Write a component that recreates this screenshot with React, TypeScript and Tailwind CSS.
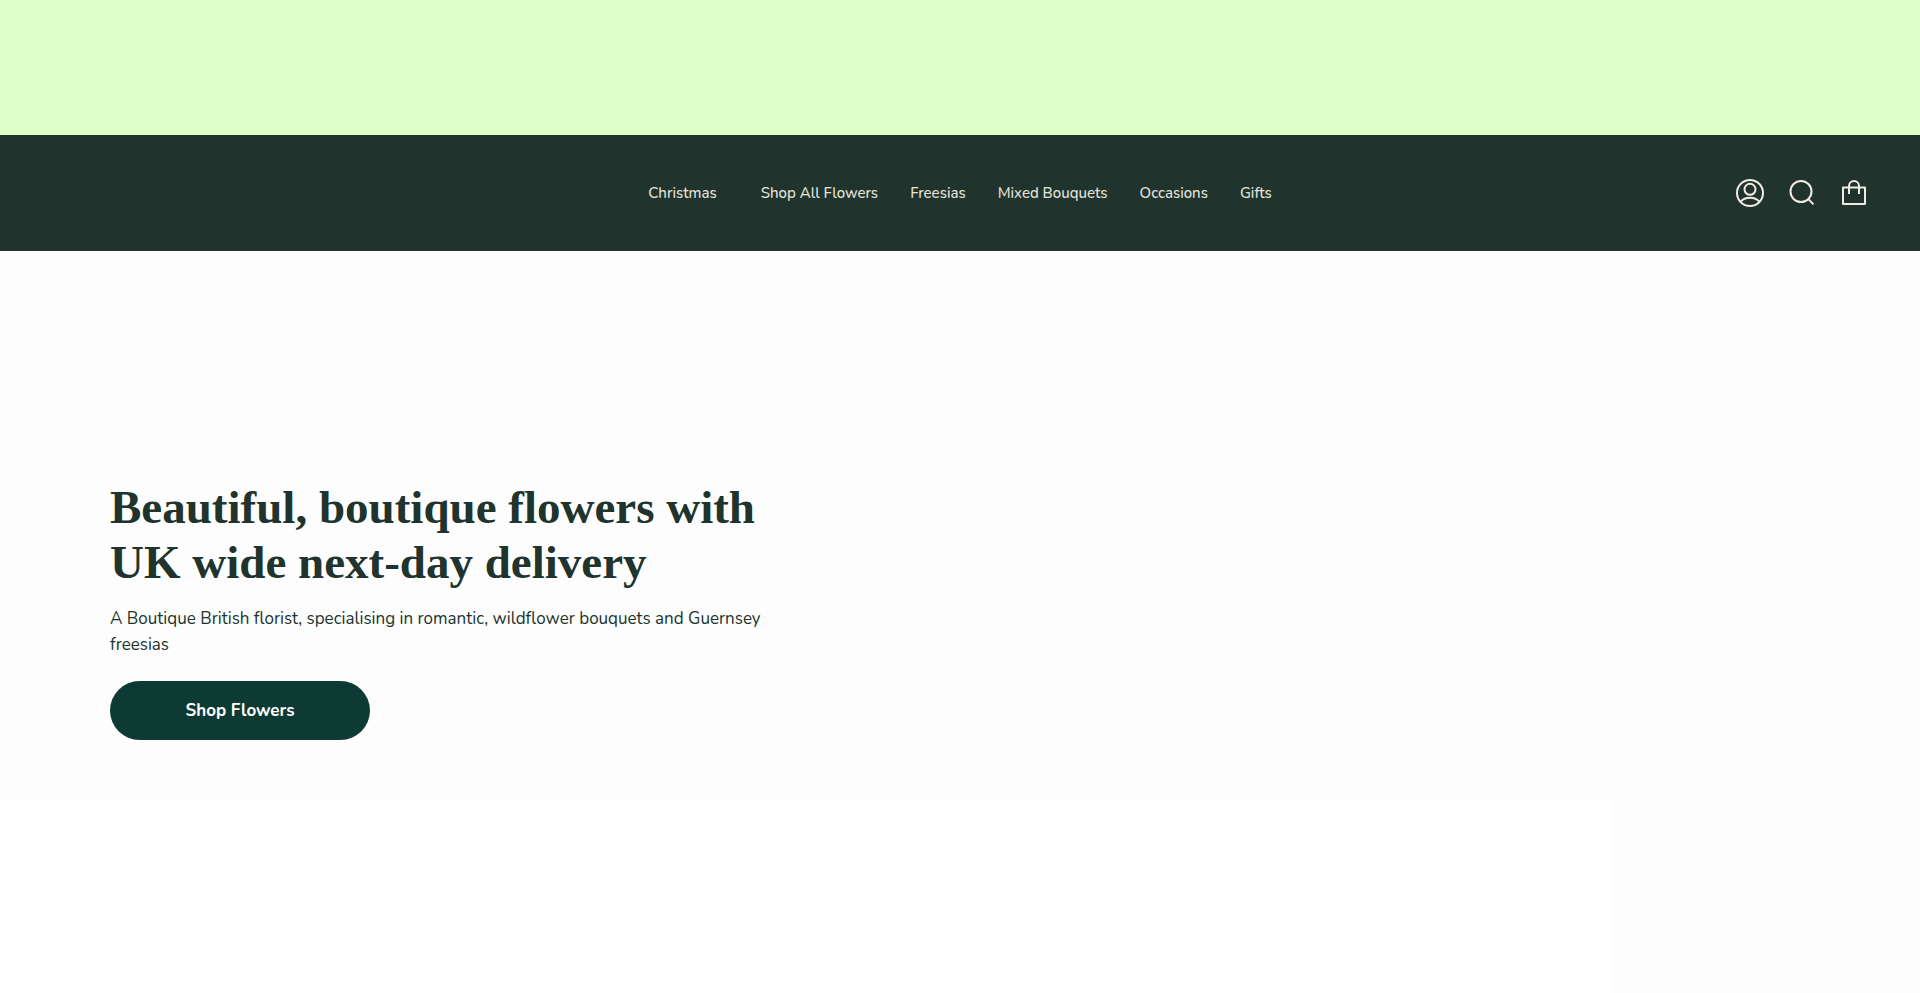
const links = ["Christmas", "Shop All Flowers", "Freesias", "Mixed Bouquets", "Occasions", "Gifts"];

function AccountIcon() {
  return (
    <svg viewBox="0 0 28 28" className="size-7" fill="none" stroke="currentColor" strokeWidth="2" aria-hidden="true">
      <circle cx="14" cy="14" r="13" />
      <circle cx="14" cy="10.3" r="5.5" />
      <path d="M4.5 22.6C6.8 20 10 18.7 14 18.7s7.2 1.3 9.5 3.9" />
    </svg>
  );
}

function SearchIcon() {
  return (
    <svg viewBox="0 0 28 28" className="size-7" fill="none" stroke="currentColor" strokeWidth="2" aria-hidden="true">
      <circle cx="13" cy="12.5" r="10.5" />
      <path d="M19.9 19.6l5.6 5.8" />
    </svg>
  );
}

function BagIcon() {
  return (
    <svg viewBox="0 0 28 28" className="size-7" fill="none" stroke="currentColor" strokeWidth="2" aria-hidden="true">
      <path d="M3 8.5h22V25H3z" strokeLinejoin="round" />
      <path d="M9 15V7a5 5 0 0 1 10 0v8" />
    </svg>
  );
}

export default function App() {
  return (
    <div className="flex min-h-screen flex-col bg-white font-['Nunito','Noto_Sans',sans-serif] text-[#20332c]">
      <div className="h-[135px] bg-[#ddfec8]" />
      <header className="grid h-[116px] grid-cols-[1fr_auto_1fr] items-center bg-[#20332c] px-13 text-[#f0ebe4]">
        <nav aria-label="Main" className="col-start-2">
          <ul className="flex gap-8 text-[15px] leading-6 font-medium text-[#e4e3dc]">
            {links.map((label) => (
              <li key={label} className="first:mr-3">
                <a href="#" className="whitespace-nowrap">{label}</a>
              </li>
            ))}
          </ul>
        </nav>
        <div className="flex justify-end gap-6">
          <button type="button" aria-label="Account"><AccountIcon /></button>
          <button type="button" aria-label="Search"><SearchIcon /></button>
          <button type="button" aria-label="Cart"><BagIcon /></button>
        </div>
      </header>
      <main className="flex grow flex-col">
        <section className="flex min-h-[549px] items-end bg-[#fdfdfd] px-[110px] pb-[60px]">
          <div className="max-w-[660px]">
            <h1 className="font-['Liberation_Serif',serif] text-[47px] leading-[55px] font-bold">
              Beautiful, boutique flowers with UK wide next-day delivery
            </h1>
            <p className="mt-4 text-[17px] leading-[26px]">
              A Boutique British florist, specialising in romantic, wildflower bouquets and Guernsey freesias
            </p>
            <a
              href="#"
              className="mt-[23px] flex h-[59px] w-[260px] items-center justify-center rounded-full bg-[#0d3b33] text-[17px] font-bold text-white"
            >
              Shop Flowers
            </a>
          </div>
        </section>
        <div className="flex grow">
          <div className="grow bg-white" />
          <div className="w-[16%] bg-[#fdfdfd]" />
        </div>
      </main>
    </div>
  );
}
